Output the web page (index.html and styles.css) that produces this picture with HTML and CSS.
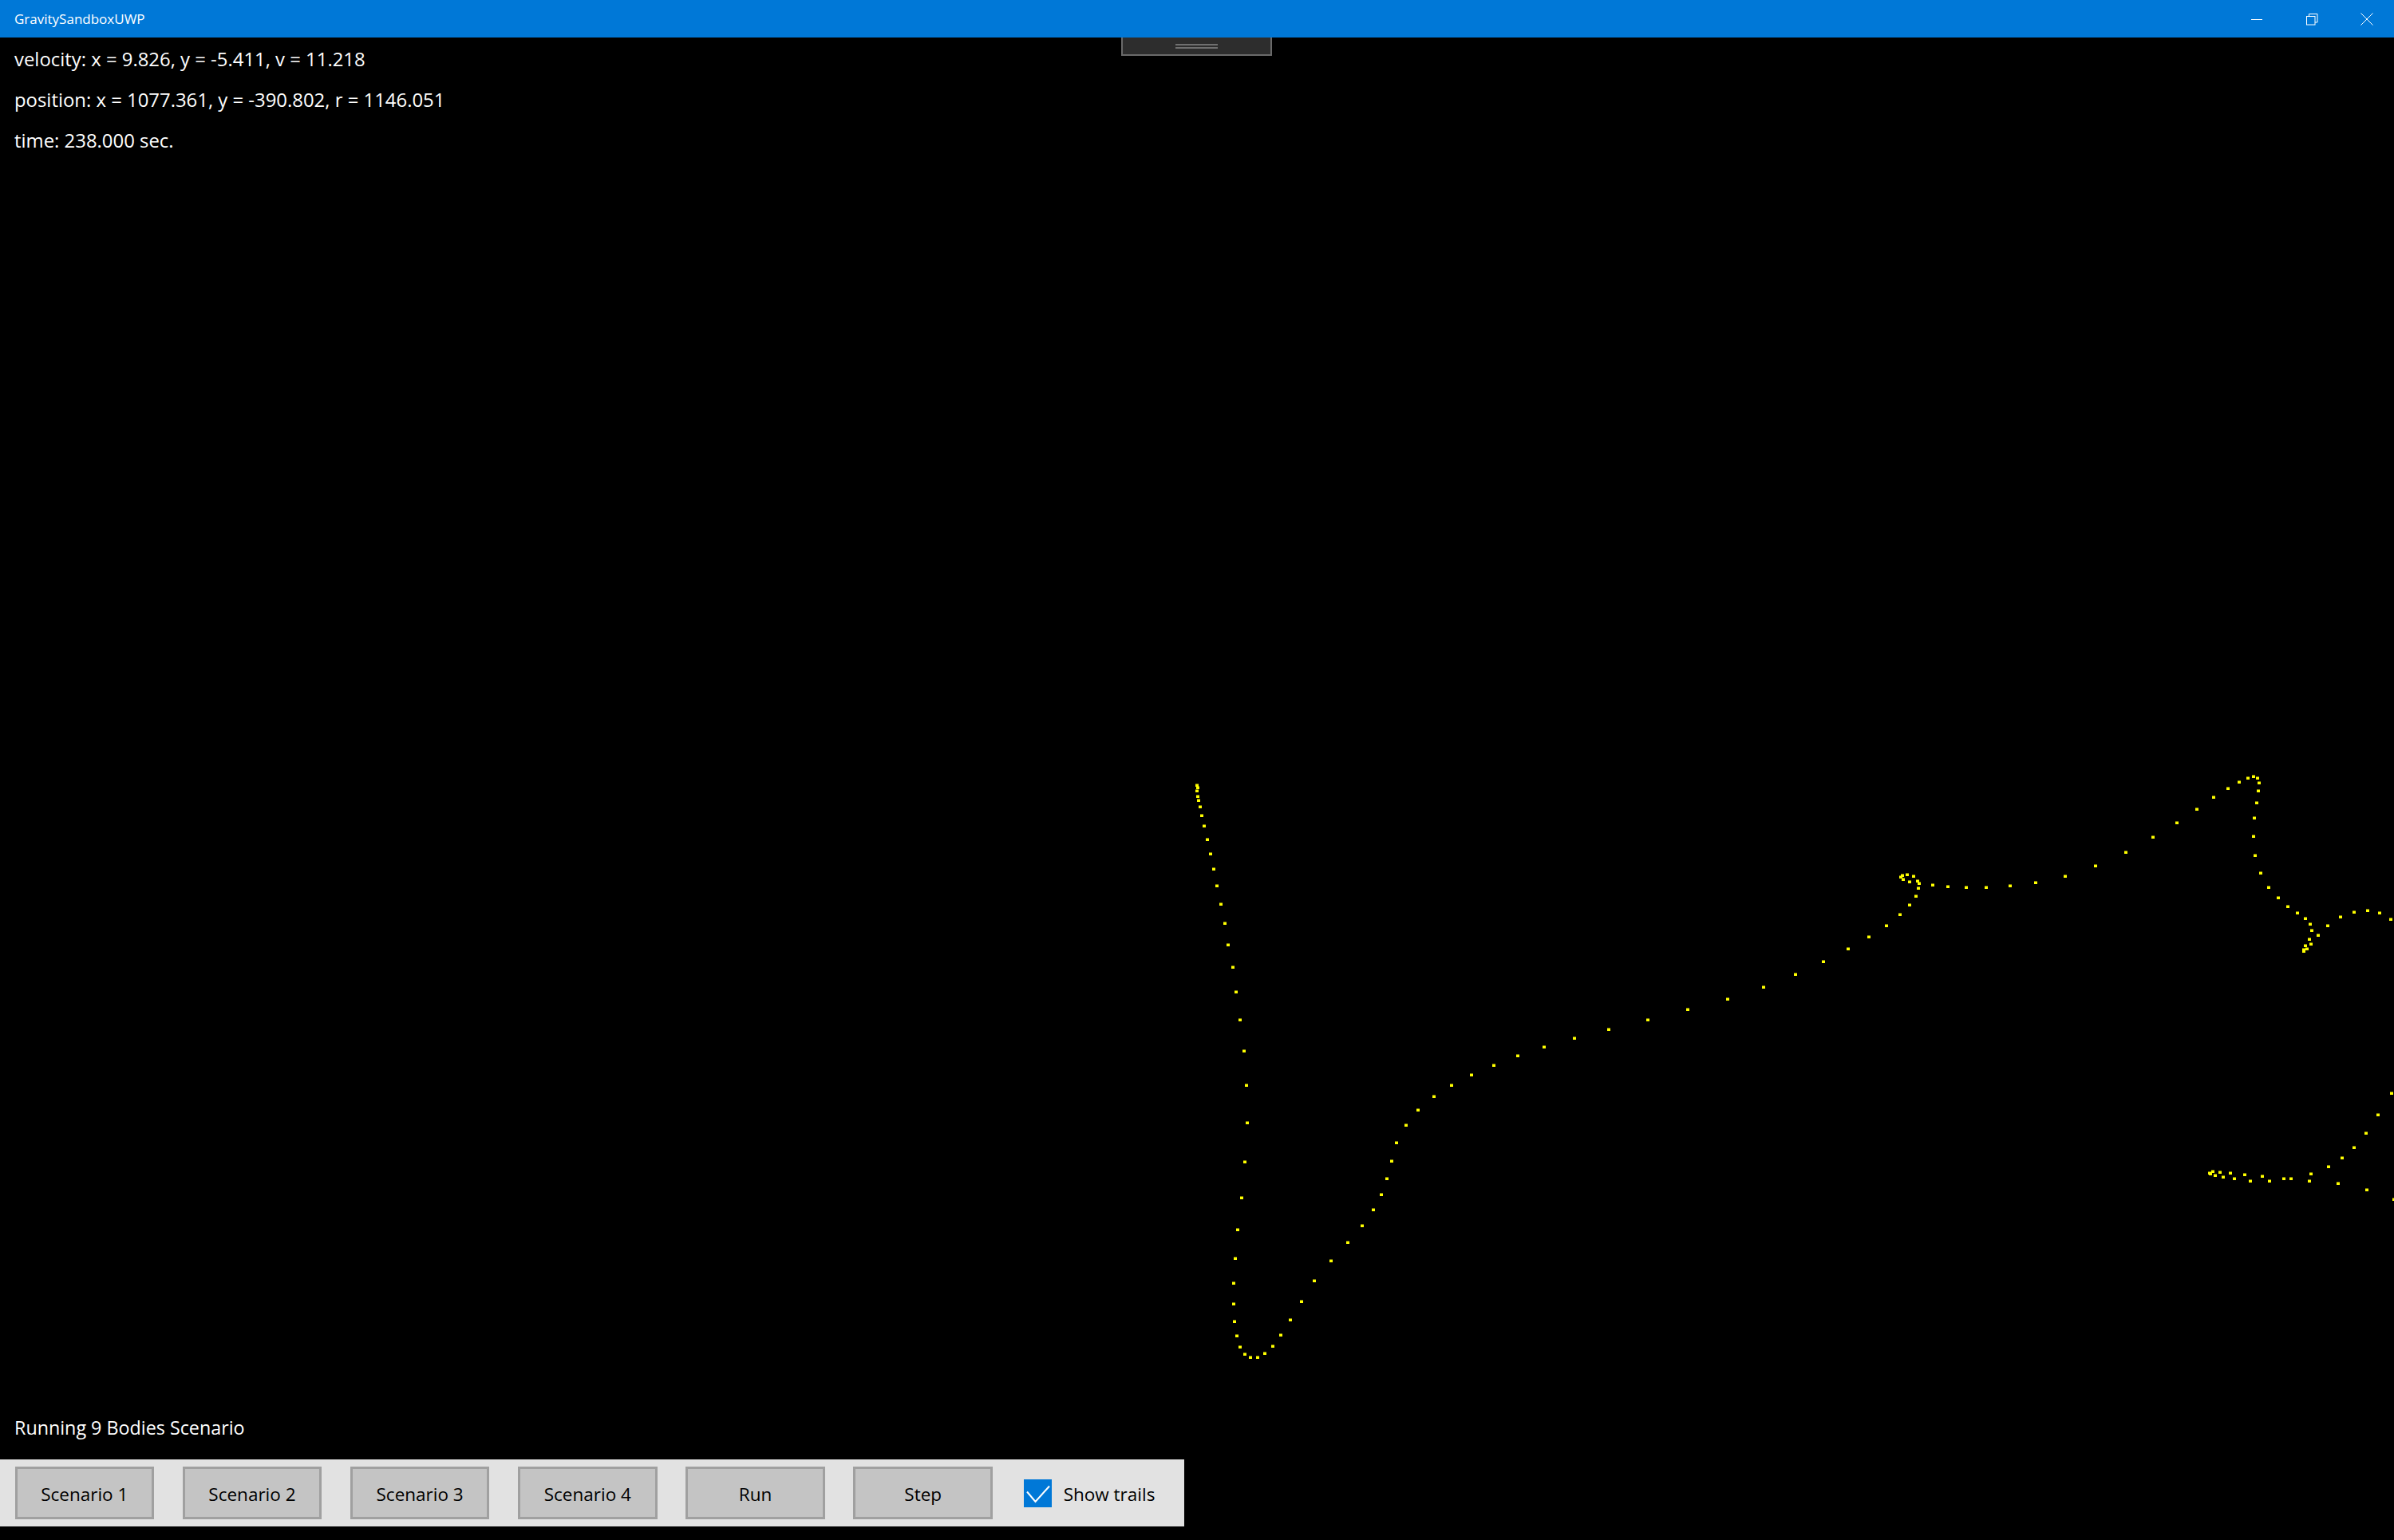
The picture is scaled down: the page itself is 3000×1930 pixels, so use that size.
FILE: index.html
```html
<!DOCTYPE html>
<html>
<head>
<meta charset="utf-8">
<title>GravitySandboxUWP</title>
<link rel="stylesheet" href="styles.css">
</head>
<body>
<div class="window">
  <header class="titlebar">
    <div class="title">GravitySandboxUWP</div>
    <div class="caption">
      <div class="cap-btn"><svg width="16" height="16" viewBox="0 0 16 16"><path d="M1 8.5H15" stroke="#fff" stroke-width="1" fill="none"/></svg></div>
      <div class="cap-btn"><svg width="16" height="16" viewBox="0 0 16 16"><rect x="1.5" y="4.5" width="10.5" height="10.5" stroke="#fff" stroke-width="1" fill="none"/><path d="M4.5 4.5V1.5H15V12H12" stroke="#fff" stroke-width="1" fill="none"/></svg></div>
      <div class="cap-btn"><svg width="16" height="16" viewBox="0 0 16 16"><path d="M0.5 0.5L15.5 15.5M15.5 0.5L0.5 15.5" stroke="#fff" stroke-width="1" fill="none"/></svg></div>
    </div>
  </header>
  <main class="main">
    <svg class="canvas" width="3000" height="1883" viewBox="0 47 3000 1883">
      <g id="dots" fill="#ffff00"></g>
    </svg>
    <div class="handle"><span class="grip"></span><span class="grip"></span></div>
    <div class="stats">
      <div class="line">velocity: x = 9.826, y = -5.411, v = 11.218</div>
      <div class="line">position: x = 1077.361, y = -390.802, r = 1146.051</div>
      <div class="line">time: 238.000 sec.</div>
    </div>
    <div class="spacer"></div>
    <div class="status">Running 9 Bodies Scenario</div>
    <div class="toolbar">
      <div class="btn">Scenario 1</div>
      <div class="btn">Scenario 2</div>
      <div class="btn">Scenario 3</div>
      <div class="btn">Scenario 4</div>
      <div class="btn">Run</div>
      <div class="btn">Step</div>
      <label class="check">
        <span class="box"><svg width="35" height="35" viewBox="0 0 35 35"><path d="M4 15.5L14.5 28L32 8.5" stroke="#fff" stroke-width="2" fill="none"/></svg></span>
        <span class="check-label">Show trails</span>
      </label>
    </div>
  </main>
</div>
<script src="script.js"></script>
</body>
</html>
```
FILE: styles.css
```css
* { box-sizing: border-box; }
html, body { margin: 0; padding: 0; background: #000; }
body { width: 3000px; height: 1930px; overflow: hidden; font-family: "Open Sans", "Noto Sans", sans-serif; }
.window { width: 3000px; height: 1930px; display: flex; flex-direction: column; }
.titlebar { height: 47px; background: #0078d7; display: flex; align-items: center; justify-content: space-between; color: #fff; flex: none; }
.title { font-size: 17px; padding-left: 18px; padding-bottom: 1px; }
.caption { display: flex; height: 47px; }
.cap-btn { width: 69px; height: 47px; display: flex; align-items: center; justify-content: center; }
.main { position: relative; flex: 1; display: flex; flex-direction: column; color: #fff; }
.canvas { position: absolute; left: 0; top: 0; }
.handle { position: absolute; top: 0; left: 1405px; width: 189px; height: 23px; border: 2px solid #6a6a6a; border-top: none; background: #2d2d2d; display: flex; flex-direction: column; align-items: center; padding-top: 8px; gap: 2px; }
.grip { display: block; width: 53px; height: 2px; background: #707070; }
.stats { position: relative; padding: 1px 0 0 18px; font-size: 23.9px; }
.line { line-height: 51px; height: 51px; white-space: nowrap; }
.spacer { flex: 1; }
.status { position: relative; font-size: 23.3px; line-height: 51px; padding-left: 18px; margin-bottom: 14px; }
.toolbar { position: relative; width: 1484px; height: 84px; background: #e2e2e2; display: flex; align-items: flex-start; padding: 9px 0 0 18.5px; gap: 35.7px; margin-bottom: 17px; }
.btn { width: 174.5px; height: 66px; background: #c4c4c4; border: 3px solid #a0a0a0; color: #000; font-size: 22.5px; display: flex; align-items: center; justify-content: center; padding-top: 3px; }
.check { display: flex; align-items: center; height: 66px; margin-left: 3px; color: #000; font-size: 22.5px; }
.box { width: 35px; height: 35px; background: #0078d7; display: block; }
.box svg { display: block; }
.check-label { margin-left: 15px; padding-top: 2px; }
```
FILE: script.js
```js
const pts = [
[1500,984],[1501,987],[1500,991],[1501,998],[1502,1003],[1504,1011],[1506,1022],[1509,1035],[1513,1052],[1517,1070],[1521,1089],[1525,1110],[1530,1133],[1535,1157],[1539,1184],[1545,1212],[1549,1243],[1554,1278],[1559,1317],[1562,1360],[1563,1407],[1560,1456],[1556,1501],[1551,1541],[1548,1577],[1546,1608],[1546,1634],[1547,1656],[1550,1674],[1554,1688],[1560,1697],[1567,1701],[1576,1701],[1585,1696],[1595,1687],[1605,1673],[1617,1654],[1631,1631],[1647,1605],
[1668,1580],[1689,1557],[1707,1536],[1721,1516],[1731,1497],[1738,1477],[1744,1455],
[1750,1432],[1762,1410],[1777,1391],[1797,1374],[1819,1360],[1844,1347],[1872,1335],[1902,1323],[1935,1312],[1973,1301],[2016,1290],
[2065,1278],[2115,1265],
[2165,1252],[2210,1237],[2250,1221],[2285,1205],[2316,1189],[2342,1174],[2364,1160],[2381,1146],[2393,1134],[2401,1123],[2404,1113],[2405,1107],[2403,1104],[2398,1098],[2390,1096],[2384,1097],[2382,1099],[2385,1102],[2393,1105],[2422,1109],[2441,1111],[2464,1112],
[2489,1112],[2519,1110],[2551,1106],[2588,1098],[2626,1085],
[2664,1068],[2698,1049],[2728,1031],[2753,1014],[2774,999],[2792,988],[2806,980],[2817,975],[2824,973],[2829,975],[2831,981],[2830,991],[2828,1006],[2825,1025],[2824,1048],[2826,1072],[2833,1094],[2843,1112],[2855,1125],[2867,1136],[2879,1144],[2889,1151],[2895,1158],[2897,1166],[2894,1177],[2889,1185],[2887,1190],[2887,1192],[2891,1189],[2896,1183],[2905,1172],[2917,1160],[2933,1149],[2950,1143],[2967,1141],[2982,1144],[2996,1152],
[2769,1470],[2773,1468],[2770,1471],[2776,1473],[2782,1469],[2786,1475],[2795,1470],[2800,1477],[2813,1472],[2820,1480],[2835,1474],[2844,1480],[2862,1477],[2871,1477],[2894,1480],[2896,1471],[2918,1462],[2930,1483],[2935,1451],[2950,1438],[2965,1420],[2966,1491],[2980,1397],[2997,1370],[3000,1503]
];
const g = document.getElementById('dots');
const ns = 'http://www.w3.org/2000/svg';
for (const [x, y] of pts) {
  const r = document.createElementNS(ns, 'rect');
  r.setAttribute('x', x - 2);
  r.setAttribute('y', y - 1.5);
  r.setAttribute('width', 4);
  r.setAttribute('height', 3.5);
  g.appendChild(r);
}
```
